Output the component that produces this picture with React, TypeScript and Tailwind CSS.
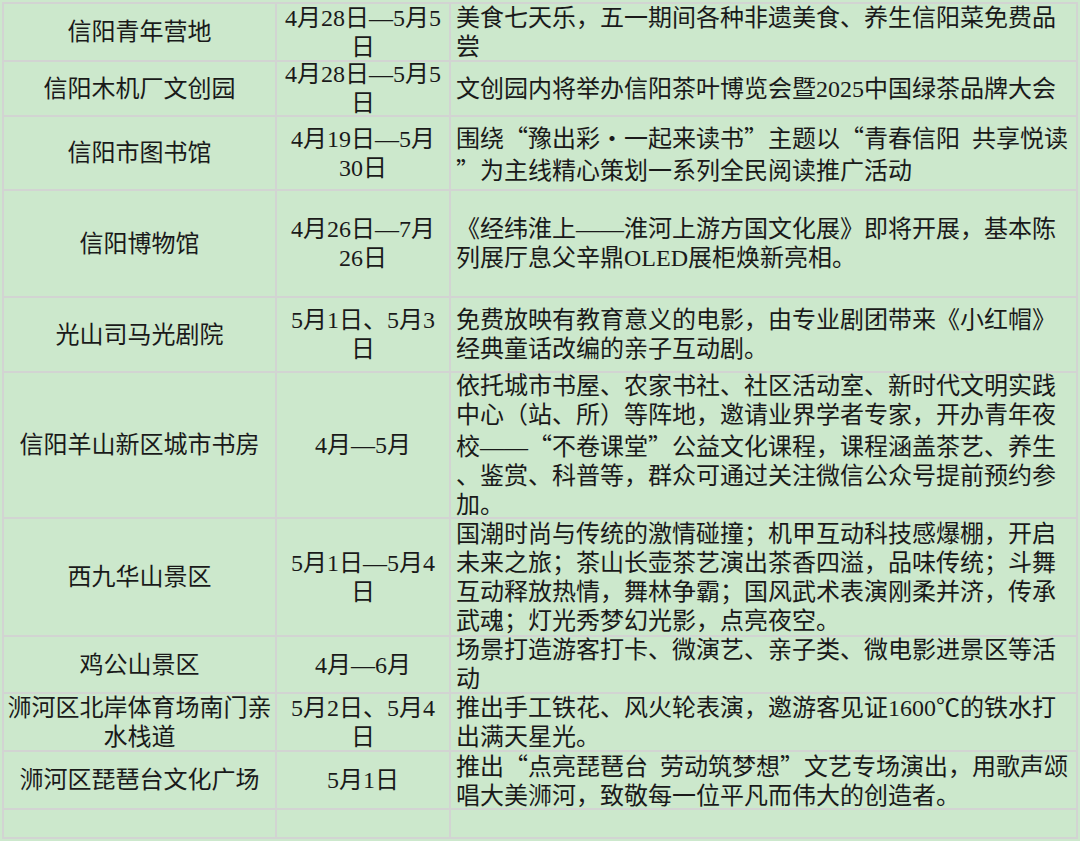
import React from "react";

type Row = { place: string[]; date: string[]; desc: string[] };

// each array entry is one line, wrapped the way the source sheet wraps it
const rows: Row[] = [
  {
    place: ["信阳青年营地"],
    date: ["4月28日—5月5", "日"],
    desc: ["美食七天乐，五一期间各种非遗美食、养生信阳菜免费品", "尝"],
  },
  {
    place: ["信阳木机厂文创园"],
    date: ["4月28日—5月5", "日"],
    desc: ["文创园内将举办信阳茶叶博览会暨2025中国绿茶品牌大会"],
  },
  {
    place: ["信阳市图书馆"],
    date: ["4月19日—5月", "30日"],
    desc: ["围绕“豫出彩·一起来读书”主题以“青春信阳\u2002共享悦读", "”为主线精心策划一系列全民阅读推广活动"],
  },
  {
    place: ["信阳博物馆"],
    date: ["4月26日—7月", "26日"],
    desc: ["《经纬淮上——淮河上游方国文化展》即将开展，基本陈", "列展厅息父辛鼎OLED展柜焕新亮相。"],
  },
  {
    place: ["光山司马光剧院"],
    date: ["5月1日、5月3", "日"],
    desc: ["免费放映有教育意义的电影，由专业剧团带来《小红帽》", "经典童话改编的亲子互动剧。"],
  },
  {
    place: ["信阳羊山新区城市书房"],
    date: ["4月—5月"],
    desc: [
      "依托城市书屋、农家书社、社区活动室、新时代文明实践",
      "中心（站、所）等阵地，邀请业界学者专家，开办青年夜",
      "校——“不卷课堂”公益文化课程，课程涵盖茶艺、养生",
      "、鉴赏、科普等，群众可通过关注微信公众号提前预约参",
      "加。",
    ],
  },
  {
    place: ["西九华山景区"],
    date: ["5月1日—5月4", "日"],
    desc: [
      "国潮时尚与传统的激情碰撞；机甲互动科技感爆棚，开启",
      "未来之旅；茶山长壶茶艺演出茶香四溢，品味传统；斗舞",
      "互动释放热情，舞林争霸；国风武术表演刚柔并济，传承",
      "武魂；灯光秀梦幻光影，点亮夜空。",
    ],
  },
  {
    place: ["鸡公山景区"],
    date: ["4月—6月"],
    desc: ["场景打造游客打卡、微演艺、亲子类、微电影进景区等活", "动"],
  },
  {
    place: ["浉河区北岸体育场南门亲", "水栈道"],
    date: ["5月2日、5月4", "日"],
    desc: ["推出手工铁花、风火轮表演，邀游客见证1600℃的铁水打", "出满天星光。"],
  },
  {
    place: ["浉河区琵琶台文化广场"],
    date: ["5月1日"],
    desc: ["推出“点亮琵琶台\u2002劳动筑梦想”文艺专场演出，用歌声颂", "唱大美浉河，致敬每一位平凡而伟大的创造者。"],
  },
  { place: [], date: [], desc: [] },
];

// full-width quotes and dots, as the CJK font of the sheet draws them
function Line({ text }: { text: string }) {
  const parts = text.split(/([“”·])/);
  return (
    <div className="whitespace-pre">
      {parts.map((p, i) => {
        if (p === "“")
          return (
            <span key={i} className="inline-block w-[1em] text-right font-['Noto_Sans_CJK_SC']">
              “
            </span>
          );
        if (p === "”")
          return (
            <span key={i} className="inline-block w-[1em] text-left font-['Noto_Sans_CJK_SC']">
              ”
            </span>
          );
        if (p === "·")
          return (
            <span key={i} className="inline-block w-[1em] text-center font-['Noto_Sans_CJK_SC']">
              ·
            </span>
          );
        return <React.Fragment key={i}>{p}</React.Fragment>;
      })}
    </div>
  );
}

export default function App() {
  return (
    <div className="w-[1080px] h-[841px] overflow-hidden bg-[#cce8cc] pt-[2px] pl-[2px] font-['Liberation_Serif','Noto_Sans_CJK_SC',serif] text-[24px] leading-[29px] text-[#1a1a1a]">
      <div className="grid w-[1076px] grid-cols-[271px_172px_625px] grid-rows-[56px_53px_72px_105px_73px_144px_116px_55px_56px_56px_27px] gap-[2px] bg-[#d2d4d2] p-[2px]">
        {rows.map((r, i) => (
          <React.Fragment key={i}>
            <div className="flex flex-col items-center justify-center overflow-visible bg-[#cce8cc] pt-[1px] text-center">
              {r.place.map((l, j) => (
                <Line key={j} text={l} />
              ))}
            </div>
            <div className="flex flex-col items-center justify-center overflow-visible bg-[#cce8cc] pt-[1px] text-center">
              {r.date.map((l, j) => (
                <Line key={j} text={l} />
              ))}
            </div>
            <div className="flex flex-col justify-center overflow-visible bg-[#cce8cc] pl-[5px] pt-[1px]">
              {r.desc.map((l, j) => (
                <Line key={j} text={l} />
              ))}
            </div>
          </React.Fragment>
        ))}
      </div>
    </div>
  );
}
